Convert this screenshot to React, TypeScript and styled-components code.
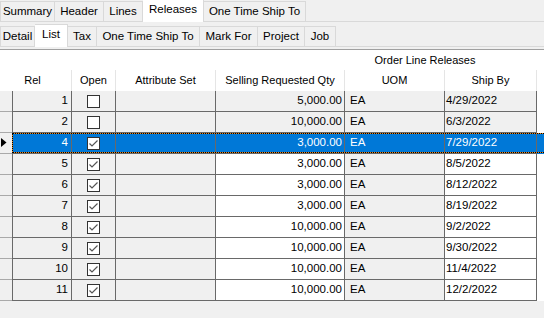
import React from "react";
import styled, {createGlobalStyle, css} from "styled-components";

const GlobalStyle = createGlobalStyle`
  html, body {
    margin: 0;
    padding: 0;
    background: #f0f0f0;
  }

  body {
    font-family: "Liberation Sans", Arial, sans-serif;
    font-size: 11px;
    color: #000;
  }
`

type TabType = { title: string, width: number }

const topTabs: TabType[] = [
    {title: "Summary", width: 55},
    {title: "Header", width: 49},
    {title: "Lines", width: 39},
    {title: "Releases", width: 61},
    {title: "One Time Ship To", width: 102},
]
const subTabs: TabType[] = [
    {title: "Detail", width: 35},
    {title: "List", width: 33},
    {title: "Tax", width: 29},
    {title: "One Time Ship To", width: 103},
    {title: "Mark For", width: 58},
    {title: "Project", width: 47},
    {title: "Job", width: 31},
]

type ReleaseType = { rel: number, open: boolean, qty: string, uom: string, shipBy: string }

const releases: ReleaseType[] = [
    {rel: 1, open: false, qty: "5,000.00", uom: "EA", shipBy: "4/29/2022"},
    {rel: 2, open: false, qty: "10,000.00", uom: "EA", shipBy: "6/3/2022"},
    {rel: 4, open: true, qty: "3,000.00", uom: "EA", shipBy: "7/29/2022"},
    {rel: 5, open: true, qty: "3,000.00", uom: "EA", shipBy: "8/5/2022"},
    {rel: 6, open: true, qty: "3,000.00", uom: "EA", shipBy: "8/12/2022"},
    {rel: 7, open: true, qty: "3,000.00", uom: "EA", shipBy: "8/19/2022"},
    {rel: 8, open: true, qty: "10,000.00", uom: "EA", shipBy: "9/2/2022"},
    {rel: 9, open: true, qty: "10,000.00", uom: "EA", shipBy: "9/30/2022"},
    {rel: 10, open: true, qty: "10,000.00", uom: "EA", shipBy: "11/4/2022"},
    {rel: 11, open: true, qty: "10,000.00", uom: "EA", shipBy: "12/2/2022"},
]
const selectedRel = 4

const App: React.FC = () => {
    return (
        <Page>
            <GlobalStyle/>
            <TabStrip $h={21}>
                {topTabs.map((t, i) => <Tab key={t.title} $w={t.width} $first={i === 0}
                                            $active={t.title === "Releases"} $h={20}>{t.title}</Tab>)}
            </TabStrip>
            <TabStrip $h={24}>
                {subTabs.map((t, i) => <Tab key={t.title} $w={t.width} $first={i === 0}
                                            $active={t.title === "List"} $h={20}>{t.title}</Tab>)}
            </TabStrip>
            <Grid>
                <BandRow>Order Line Releases</BandRow>
                <HeaderRow>
                    <HeaderCell/>
                    <HeaderCell $sep={false} $shift={19}>Rel</HeaderCell>
                    <HeaderCell>Open</HeaderCell>
                    <HeaderCell>Attribute Set</HeaderCell>
                    <HeaderCell>Selling Requested Qty</HeaderCell>
                    <HeaderCell>UOM</HeaderCell>
                    <HeaderCell>Ship By</HeaderCell>
                    <HeaderCell/>
                </HeaderRow>
                {releases.map(r => {
                    const sel = r.rel === selectedRel
                    return <Row key={r.rel} $selected={sel}>
                        <RowHeader>
                            {sel && <svg width="6" height="9" viewBox="0 0 6 9">
                                <path d="M0 0 L5.5 4.5 L0 9 Z" fill="#000"/>
                            </svg>}
                        </RowHeader>
                        <Cell $sel={sel} $align={"right"} $pad={3}>{r.rel}</Cell>
                        <Cell $sel={sel} $align={"center"}>
                            <CheckBox>
                                {r.open && <svg width="11" height="11" viewBox="0 0 11 11">
                                    <polyline points="1.5,5.5 4,8 9.5,2.5" fill="none" stroke="#555"
                                              strokeWidth="1.2"/>
                                </svg>}
                            </CheckBox>
                        </Cell>
                        <Cell $sel={sel}/>
                        <Cell $sel={sel} $edit={r.open} $align={"right"} $pad={2}>{r.qty}</Cell>
                        <Cell $sel={sel} $pad={5}>{r.uom}</Cell>
                        <Cell $sel={sel} $edit={r.open} $pad={1}>{r.shipBy}</Cell>
                        <Filler $sel={sel}/>
                    </Row>
                })}
            </Grid>
        </Page>
    )
};

const columns = "12px 59px 44px 100px 129px 100px 92px 1fr"

const Page = styled.div`
  width: 544px;
  height: 318px;
  overflow: hidden;
  background: #f0f0f0;
  display: flex;
  flex-direction: column;
`

const TabStrip = styled.div<{ $h: number }>`
  display: flex;
  align-items: flex-end;
  height: ${p => p.$h}px;
  border-bottom: 1px solid #d9d9d9;
  flex-shrink: 0;
`

const Tab = styled.div<{ $w: number, $h: number, $active: boolean, $first: boolean }>`
  box-sizing: border-box;
  width: ${p => p.$w}px;
  height: ${p => p.$h}px;
  display: flex;
  align-items: center;
  justify-content: center;
  white-space: nowrap;
  background: #f0f0f0;
  border-top: 1px solid #d9d9d9;
  border-right: 1px solid #d9d9d9;
  border-left: ${p => p.$first ? "1px solid #d9d9d9" : "none"};
  padding-bottom: 1px;
  font-size: 11.5px;

  ${p => p.$active && css`
    background: #fff;
    height: ${p.$h + 3}px;
    margin-bottom: -1px;
    padding-bottom: 4px;
    position: relative;
    z-index: 1;
  `}
`

const Grid = styled.div`
  margin-top: 2px;
  border-top: 1px solid #a0a0a0;
  background: #fff;
  flex-shrink: 0;
`

const BandRow = styled.div`
  height: 20px;
  box-sizing: border-box;
  padding: 0 0 1px 306px;
  display: flex;
  align-items: center;
  justify-content: center;
  font-size: 11px;
`

const HeaderRow = styled.div`
  display: grid;
  grid-template-columns: ${columns};
  height: 21px;
`

const HeaderCell = styled.div<{ $sep?: boolean, $shift?: number }>`
  box-sizing: border-box;
  border-left: 1px solid ${p => p.$sep === false ? "#fff" : "#e5e5e5"};
  display: flex;
  align-items: center;
  justify-content: center;
  white-space: nowrap;
  padding-right: ${p => p.$shift || 0}px;
  padding-bottom: 2px;
  font-size: 11px;

  &:first-child {
    border-left: none;
  }
`

const Row = styled.div<{ $selected: boolean }>`
  display: grid;
  grid-template-columns: ${columns};
  height: 21px;
  position: relative;

  ${p => p.$selected && css`
    &::before, &::after {
      content: "";
      position: absolute;
      left: 12px;
      right: -2px;
      top: 0;
      bottom: 1px;
      box-sizing: border-box;
      pointer-events: none;
    }

    &::before {
      border: 1px solid #e8871e;
    }

    &::after {
      border: 1px dotted #000;
    }
  `}
`

const RowHeader = styled.div`
  box-sizing: border-box;
  background: #f0f0f0;
  border-bottom: 1px solid #a9a9a9;
  display: flex;
  align-items: center;
  padding: 0 0 1px 1px;
`

const Cell = styled.div<{ $sel: boolean, $edit?: boolean, $align?: "left" | "right" | "center", $pad?: number }>`
  box-sizing: border-box;
  border-left: 1px solid #696969;
  border-bottom: 1px solid #696969;
  background: ${p => p.$sel ? "#0078d7" : p.$edit ? "#fff" : "#f0f0f0"};
  color: ${p => p.$sel ? "#fff" : "#000"};
  display: flex;
  align-items: center;
  justify-content: ${p => p.$align === "right" ? "flex-end" : p.$align === "center" ? "center" : "flex-start"};
  padding: 0 ${p => p.$align === "right" ? p.$pad || 0 : 0}px 2px ${p => p.$align === "right" ? 0 : p.$pad || 0}px;
  white-space: nowrap;
  font-size: 11.5px;
`

const Filler = styled.div<{ $sel: boolean }>`
  border-left: 1px solid #696969;
  background: ${p => p.$sel ? "#0078d7" : "#fff"};
`

const CheckBox = styled.div`
  width: 13px;
  height: 13px;
  box-sizing: border-box;
  border: 1px solid #333;
  background: #fff;
  display: flex;
  align-items: center;
  justify-content: center;
  margin-top: 2px;
`

export default App;
